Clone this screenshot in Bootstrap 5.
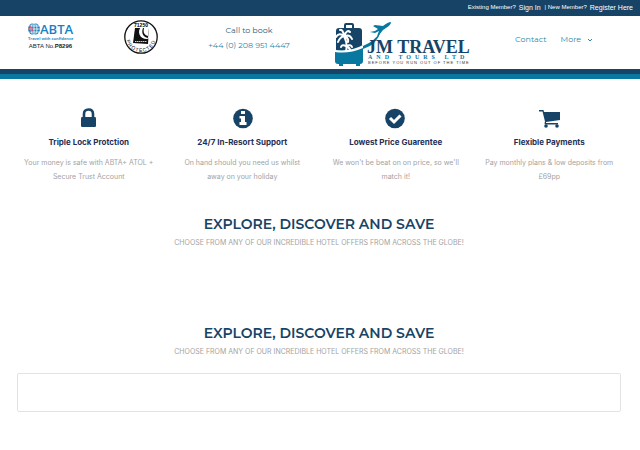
<!DOCTYPE html>
<html lang="en">
<head>
<meta charset="utf-8">
<meta name="viewport" content="width=device-width, initial-scale=1">
<title>JM Travel and Tours Ltd</title>
<link href="https://cdn.jsdelivr.net/npm/bootstrap@5.3.0/dist/css/bootstrap.min.css" rel="stylesheet">
<style>
:root { --navy: #174466; --teal: #0878a0; }
body { font-family: Inter, sans-serif; font-size: 7px; line-height: 14px; color: #a3a3a3; background: #fff; }
a { text-decoration: none; }
.topbar { background: var(--navy); height: 16px; font: 7px/15px "Liberation Sans", Arial, sans-serif; color: #fff; padding-right: 7px; }
.topbar span { font-size: 6px; }
.topbar a { color: #fff; margin: 0 4px 0 3px; }
.topbar a:last-child { margin-right: 0; }
.masthead { display: grid; grid-template-columns: 101fr 79fr 138fr 170fr 152fr; height: 53px; }
.stripes { height: 10px; border-top: 5px solid var(--navy); background: var(--teal); }
.accred { font: 6px/8px "Liberation Sans", Arial, sans-serif; color: #222; padding-top: 6px; }
.phone, .menu, .offers h2 { font-family: Montserrat, Inter, sans-serif; }
.phone { font-size: 8px; line-height: 15px; color: #315b78; padding-top: 7px; }
.phone a, .menu a, .menu button { color: #2b88a8; }
.menu { font-size: 8px; line-height: 14px; padding: 16px 0 0 27px; gap: 14px; }
.menu button { background: none; border: 0; padding: 0; }
.wrap { padding: 0 19px 0 17px; }
.features { padding: 28px 14px 0 12px; }
.feature { padding: 0 10px; }
.feature h2 { font-size: 8px; line-height: 12px; font-weight: 700; color: #252f55; margin: 7px 0 8px; }
.feature p { margin: 0; line-height: 14px; }
.offers { padding-top: 31px; }
.offers h2 { font-size: 14px; line-height: 18px; font-weight: 600; color: var(--navy); margin: 0 0 3px; }
.offers p { margin: 0; font-size: 7px; line-height: 14px; }
.offers + .offers { padding-top: 74px; }
.results { border: 1px solid #e3e3e3; border-radius: 2px; height: 39px; margin-top: 14px; }
</style>
<script src="https://cdn.jsdelivr.net/npm/bootstrap@5.3.0/dist/js/bootstrap.bundle.min.js"></script>
</head>
<body>
<div class="topbar d-flex justify-content-end">
  <span>Existing Member?</span><a href="#signin">Sign In</a>
  <span>| New Member?</span><a href="#register">Register Here</a>
</div>
<header class="masthead">
  <div class="accred d-flex flex-column align-items-center">
    <svg width="48" height="20" viewBox="0 0 48 20" role="img" aria-label="ABTA Travel with confidence">
      <circle cx="7" cy="7" r="6" fill="#1681c4"/>
      <g fill="none" stroke="#fff" stroke-width=".8"><ellipse cx="7" cy="7" rx="3" ry="6"/><path d="M7 1v12M1 7h12M2 4h10M2 10h10"/></g>
      <path d="M2 4l4 2M1 7h5M2 10l4-2" stroke="#df4e62"/>
      <text x="13" y="12" font-family="Open Sans, sans-serif" font-size="13" font-weight="600" fill="#1681c4">ABTA</text>
      <text x="1" y="18" font-family="Open Sans, sans-serif" font-size="4" font-weight="700" fill="#2c8dca">Travel with confidence</text>
    </svg>
    <div>ABTA No.<strong>P8296</strong></div>
  </div>
  <div class="text-center pt-1">
    <svg class="d-block mx-auto" width="34" height="34" viewBox="0 0 34 34" role="img" aria-label="ATOL protected 71250">
      <defs><path id="arc" d="M2 17a15 15 0 0 0 30 0"/></defs>
      <circle cx="17" cy="17" r="16.200" fill="#fff" stroke="#111" stroke-width="1.300"/>
      <path d="M11 8h14l-1 16-15-1z" fill="#111"/>
      <path d="M17 7c-4 4-2 12 6 12l3-1V7z" fill="#fff"/>
      <path d="M19 8c-2 5 0 9 5 10l1-10z" fill="#111"/>
      <path d="M20 8c-1 4 0 7 4 8l1-8z" fill="#fff"/>
      <path d="M11 21.500h12" stroke="#ccc" stroke-width="1" stroke-dasharray="1.500 .5"/>
      <text x="17" y="7" text-anchor="middle" font-family="Liberation Sans, sans-serif" font-size="5" font-weight="700">71250</text>
      <text font-family="Liberation Sans, sans-serif" font-size="5" letter-spacing="1" fill="#111"><textPath href="#arc" startOffset="50%" text-anchor="middle">PROTECTED</textPath></text>
    </svg>
  </div>
  <div class="phone text-center">Call to book<br><a href="tel:+442089514447">+44 (0) 208 951 4447</a></div>
  <div class="text-center">
    <svg class="d-block mx-auto mt-1" width="136" height="48" viewBox="0 0 136 48" role="img" aria-label="JM Travel and Tours Ltd, before you run out of the time">
      <path d="M10 9V5q0-1 1-1h6q1 0 1 1v4" fill="none" stroke="#174466" stroke-width="2"/>
      <path d="M4 8h20q3 0 3 3v15q-10 6-26 5V11q0-3 3-3z" fill="#174466"/>
      <path d="M0 30q17 1 28-5v16q0 3-3 3H3q-3 0-3-3z" fill="#0878a0"/>
      <path d="M4 43h4v3H4zM21 43h4v3h-4z" fill="#0878a0"/>
      <path d="M0 30q16 2 28-5v3Q14 34 0 32z" fill="#fff"/>
      <path d="M28 26Q40 21 46 11 42 25 28 29z" fill="#0878a0"/>
      <g fill="none" stroke="#fff" stroke-width="2" stroke-linecap="round"><path d="M9 16Q4 12 1 17M9 16Q5 17 3 22M9 16Q8 9 5 10M9 16Q12 9 15 12M9 16Q15 14 17 19M9 16Q14 18 13 22M9 16Q13 24 11 31"/><path d="M11 26q-4-2-5 1M11 26q5-2 6 1M11 26q4 2 4 4"/></g>
      <path d="M35 12l5-1 3-2-5-3 2-1 8 1q5-4 8-4 0 3-5 6l-3 2-4 5-2 1 2-5-4 2z" fill="#0878a0"/>
      <text x="32" y="33" font-family="Liberation Serif, serif" font-size="18" font-weight="700" fill="#174466">JM TRAVEL</text>
      <text x="33" y="39" font-family="Liberation Serif, serif" font-size="6" font-weight="700" letter-spacing="4" fill="#0878a0">AND TOURS LTD</text>
      <text x="33" y="44" font-family="Liberation Sans, sans-serif" font-size="4" letter-spacing="1" fill="#333">BEFORE YOU RUN OUT OF THE TIME</text>
    </svg>
  </div>
  <nav class="menu d-flex align-items-start" aria-label="Main">
    <a href="#contact">Contact</a>
    <button type="button">More <svg class="ms-1" width="6" height="6" viewBox="0 0 6 6" aria-hidden="true"><path d="M1 2l2 2 2-2" fill="none" stroke="#2b88a8"/></svg></button>
  </nav>
</header>
<div class="stripes"></div>
<main>
  <section class="features row g-0 text-center">
    <div class="feature col-3">
      <svg width="22" height="22" viewBox="0 0 22 22" fill="#174466" aria-hidden="true"><path d="M6 10V7q0-4.500 4.500-4.500T15 7v3" fill="none" stroke="#174466" stroke-width="2.600"/><rect x="3" y="10" width="15" height="10" rx="1.200"/></svg>
      <h2>Triple Lock Protction</h2>
      <p>Your money is safe with ABTA+ ATOL +<br>Secure Trust Account</p>
    </div>
    <div class="feature col-3">
      <svg width="22" height="22" viewBox="0 0 22 22" aria-hidden="true"><circle cx="12" cy="11.500" r="9.800" fill="#174466"/><path d="M10 4h4v3h-4zM8.500 9H14v6h1.500v3h-7v-3H10v-3.500H8.500z" fill="#fff"/></svg>
      <h2>24/7 In-Resort Support</h2>
      <p>On hand should you need us whilst<br>away on your holiday</p>
    </div>
    <div class="feature col-3">
      <svg width="22" height="22" viewBox="0 0 22 22" aria-hidden="true"><circle cx="10" cy="11.500" r="9.800" fill="#174466"/><path d="M5 11l4 4L15.500 8.500" fill="none" stroke="#fff" stroke-width="3"/></svg>
      <h2>Lowest Price Guarentee</h2>
      <p>We won't be beat on on price, so we'll<br>match it!</p>
    </div>
    <div class="feature col-3">
      <svg width="22" height="22" viewBox="0 0 22 22" fill="#174466" aria-hidden="true"><path d="M1 3h4.500l.5 2h16v8L8 15v1h12v1.500H7q-1-1 0-3L4.500 4.500H1z"/><circle cx="8" cy="19" r="1.800"/><circle cx="19" cy="19" r="1.800"/></svg>
      <h2>Flexible Payments</h2>
      <p>Pay monthly plans &amp; low deposits from<br>£69pp</p>
    </div>
  </section>
  <section class="offers wrap text-center">
    <h2>EXPLORE, DISCOVER AND SAVE</h2>
    <p>CHOOSE FROM ANY OF OUR INCREDIBLE HOTEL OFFERS FROM ACROSS THE GLOBE!</p>
  </section>
  <section class="offers wrap text-center">
    <h2>EXPLORE, DISCOVER AND SAVE</h2>
    <p>CHOOSE FROM ANY OF OUR INCREDIBLE HOTEL OFFERS FROM ACROSS THE GLOBE!</p>
    <div class="results"></div>
  </section>
</main>
</body>
</html>
